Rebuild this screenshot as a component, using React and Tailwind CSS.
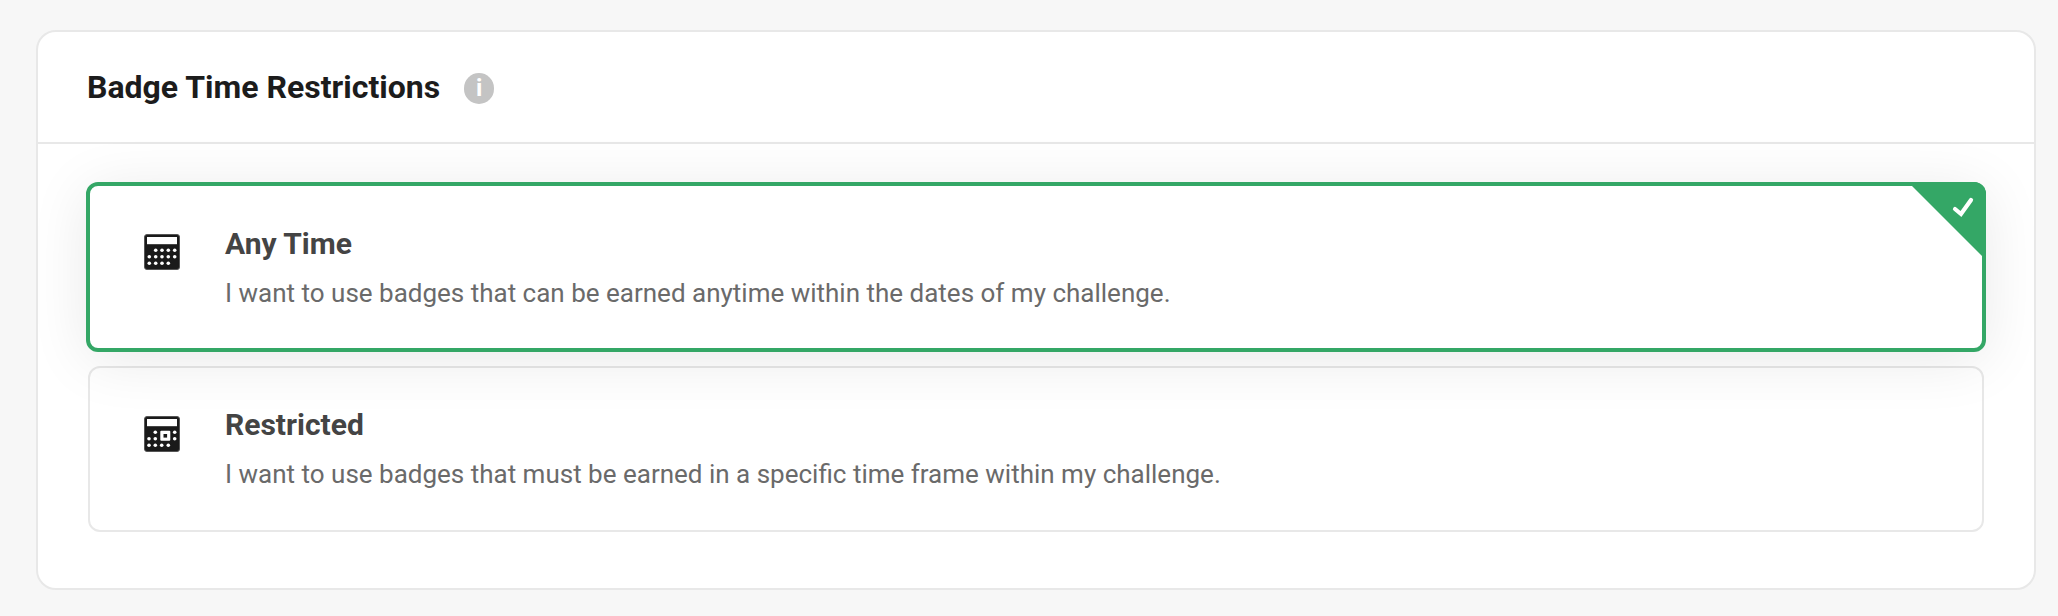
const dotsAny = [
  [11.7, 16.3], [18, 16.3], [24.3, 16.3], [30.7, 16.3],
  [5.3, 22.7], [11.7, 22.7], [18, 22.7], [24.3, 22.7], [30.7, 22.7],
  [5.3, 29.3], [11.7, 29.3], [18, 29.3], [24.3, 29.3],
]

const dotsRestricted = [
  [11.3, 16.3], [30.7, 16.3],
  [5, 22.7], [11.3, 22.7], [30.7, 22.7],
  [5, 29.3], [11.3, 29.3], [17.7, 29.3], [24.3, 29.3],
]

const CalendarIcon = ({ dots, marked }) => (
  <svg width="36" height="36" viewBox="0 0 36 36" className="shrink-0">
    <rect x="0.5" y="0.5" width="35" height="35" rx="2.5" fill="#1a1a1a" stroke="#555" strokeWidth="1" />
    <rect x="3" y="3" width="30" height="7.2" fill="#fff" />
    {dots.map(([cx, cy]) => (
      <circle key={`${cx}-${cy}`} cx={cx} cy={cy} r="1.8" fill="#fff" />
    ))}
    {marked && (
      <>
        <rect x="16.3" y="14.7" width="10" height="10" rx="1" fill="#fff" />
        <rect x="19.5" y="18" width="3.6" height="3.6" fill="#1a1a1a" />
      </>
    )}
  </svg>
)

const Option = ({ title, description, selected, dots, marked }) => (
  <div
    className={
      selected
        ? 'relative h-[170px] rounded-[12px] border-4 border-[#34a766] bg-white shadow-[0_8px_60px_rgba(0,0,0,0.09)]'
        : 'mx-[2px] h-[166px] rounded-[12px] border-2 border-[#e8e8e8]'
    }
  >
    <div className={selected ? 'flex items-start pl-[54px] pt-[41px]' : 'flex items-start pl-[54px] pt-[40px]'}>
      <div className={selected ? 'mt-[7px]' : 'mt-[8px]'}>
        <CalendarIcon dots={dots} marked={marked} />
      </div>
      <div className="ml-[45px]">
        <h3 className="text-[30px] leading-[34px] font-bold text-[#444444]">{title}</h3>
        <p className="mt-[16px] text-[26px] leading-[32px] text-[#6a6a6a]">{description}</p>
      </div>
    </div>
    {selected && (
      <svg width="78" height="78" viewBox="0 0 78 78" className="absolute -top-[4px] -right-[4px]">
        <path d="M0 0H66A12 12 0 0 1 78 12V78Z" fill="#34a766" />
        <path d="M47 27L53 32L63 18" fill="none" stroke="#fff" strokeWidth="4.2" strokeLinecap="round" />
      </svg>
    )}
  </div>
)

export default function App() {
  return (
    <div className="min-h-screen bg-[#f7f7f7] pl-[36px] pt-[30px] font-['Roboto',sans-serif]">
      <div className="w-[2000px] h-[560px] rounded-[20px] border-2 border-[#e8e8e8] bg-white">
        {/* Header */}
        <div className="flex h-[112px] items-center border-b-2 border-[#e8e8e8] pl-[49px]">
          <h2 className="text-[32px] leading-[36px] font-bold text-[#1c1c1c]">Badge Time Restrictions</h2>
          <span className="ml-[24px] mt-[2px] flex h-[31px] w-[30px] items-center justify-center rounded-full bg-[#c4c4c4] text-[24px] font-bold leading-none text-white">
            i
          </span>
        </div>

        {/* Options */}
        <div className="flex flex-col gap-[14px] px-[48px] pt-[38px]">
          <Option
            selected
            title="Any Time"
            description="I want to use badges that can be earned anytime within the dates of my challenge."
            dots={dotsAny}
          />
          <Option
            marked
            title="Restricted"
            description="I want to use badges that must be earned in a specific time frame within my challenge."
            dots={dotsRestricted}
          />
        </div>
      </div>
    </div>
  )
}
